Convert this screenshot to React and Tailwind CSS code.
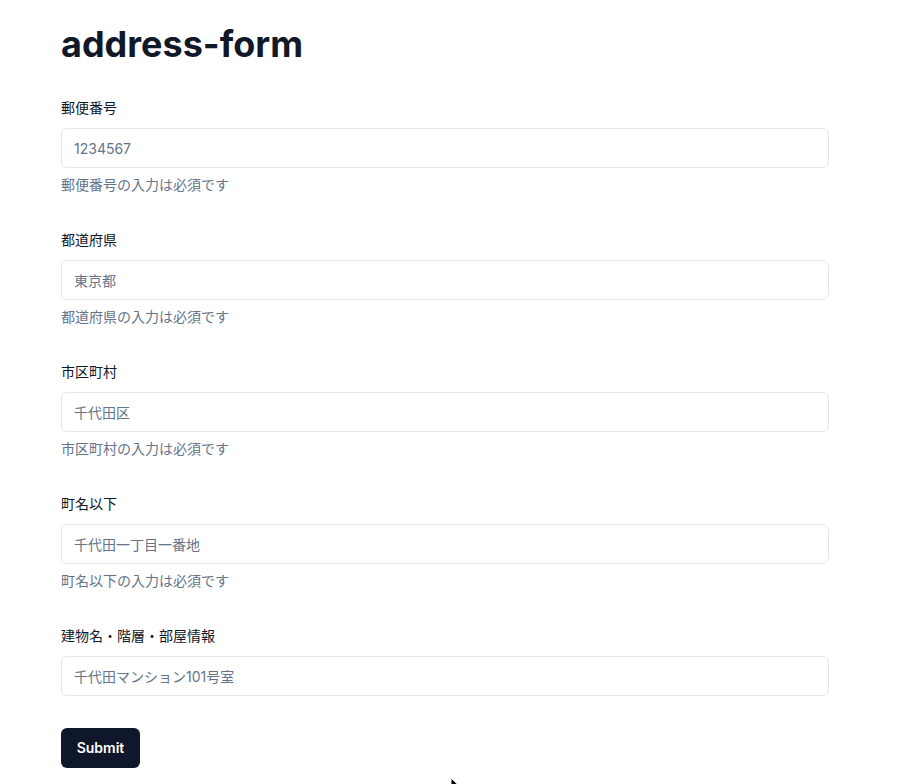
import React from "react";

const fields = [
  { label: "郵便番号", placeholder: "1234567", help: "郵便番号の入力は必須です" },
  { label: "都道府県", placeholder: "東京都", help: "都道府県の入力は必須です" },
  { label: "市区町村", placeholder: "千代田区", help: "市区町村の入力は必須です" },
  { label: "町名以下", placeholder: "千代田一丁目一番地", help: "町名以下の入力は必須です" },
  { label: "建物名・階層・部屋情報", placeholder: "千代田マンション101号室", help: null },
];

export default function App() {
  return (
    <div
      className="relative w-[908px] h-[784px] overflow-hidden bg-white text-[#0f172a]"
      style={{ fontFamily: 'Inter, "Noto Sans CJK JP", sans-serif' }}
    >
      <div className="ml-[61px] w-[768px] pt-6">
        <h1 className="text-4xl leading-10 font-bold text-[#111827] mb-[34px]">address-form</h1>
        <form className="flex flex-col" onSubmit={(e) => e.preventDefault()}>
          {fields.map((f, i) => (
            <div key={i} className={f.help ? "flex flex-col mb-[35px]" : "flex flex-col mb-8"}>
              <label className="text-sm leading-5 text-[#0f172a]">{f.label}</label>
              <input
                className="mt-[10px] h-10 w-full rounded-md border border-[#e2e8f0] bg-white px-3 text-sm text-[#0f172a] placeholder:text-[#64748b] outline-none"
                placeholder={f.placeholder}
              />
              {f.help && <p className="mt-[7px] text-sm leading-5 text-[#64748b]">{f.help}</p>}
            </div>
          ))}
          <div>
            <button
              type="submit"
              className="h-10 w-[79px] rounded-md bg-[#0f172a] text-sm font-semibold text-white"
            >
              Submit
            </button>
          </div>
        </form>
      </div>
      <svg className="absolute left-[450px] top-[777px]" width="12" height="18" viewBox="0 0 12 18">
        <path d="M1 1 L1 15 L4.5 11.5 L7 17 L9 16 L6.5 10.5 L11 10.5 Z" fill="#000" stroke="#fff" strokeWidth="1" />
      </svg>
    </div>
  );
}
